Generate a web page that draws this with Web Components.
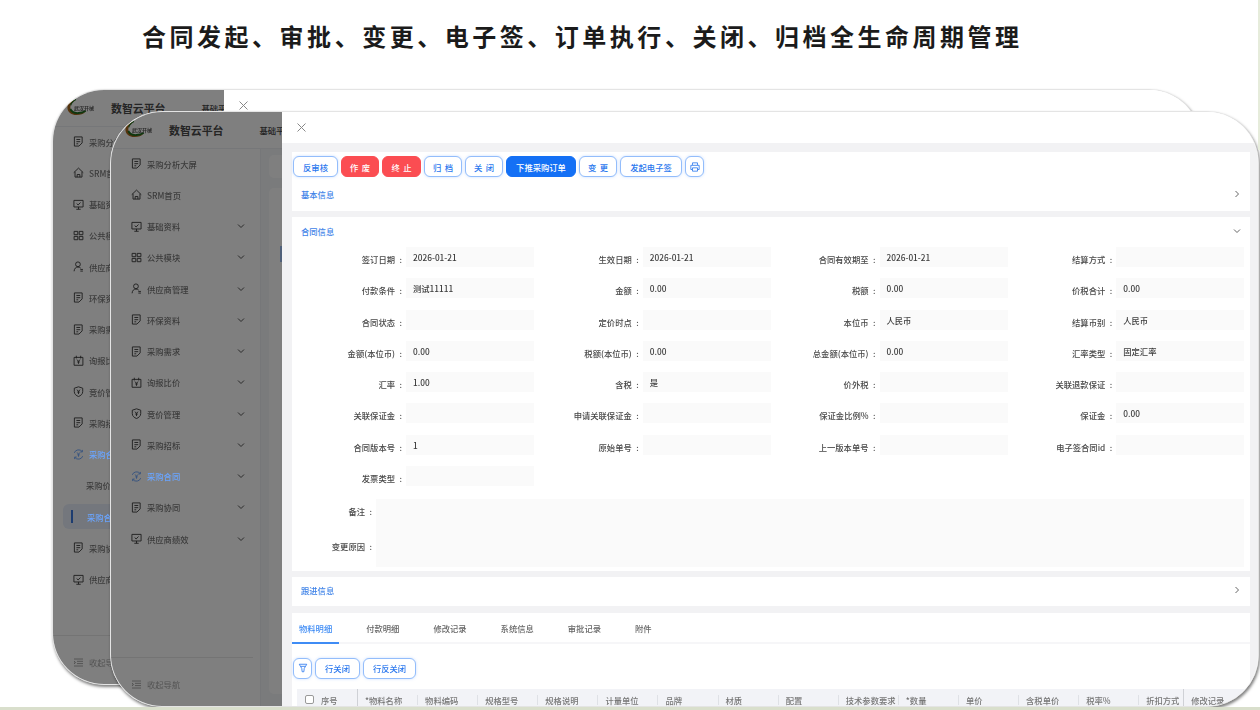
<!DOCTYPE html>
<html lang="zh-CN">
<head>
<meta charset="utf-8">
<title>合同全生命周期管理</title>
<style>
html,body{margin:0;padding:0;background:#fff;overflow:hidden}
body{width:1260px;height:710px;font-family:"Noto Sans CJK SC","Noto Sans",sans-serif;font-size:8.3px;color:#444}
</style>
</head>
<body>
<demo-slide></demo-slide>
<script>
const ICONS={
 doc:'<path d="M1.5 1h8.5v6.5M1.5 1v10h5M3.7 3.8h4.2M3.7 6.2h4.2M3.7 8.5h2M6.5 11l3.5-3.5"/>',
 home:'<path d="M.8 6.2 6 1.2l5.2 5M2.2 5.2v5.8h7.6V5.2M4.5 11V8.2h3V11"/>',
 screen:'<path d="M1 1.5h10v7.2H1zM6 8.7v2.4M3.6 11.2h4.8M4 5l1.6 1.5L8.2 3.8"/>',
 grid:'<path d="M1.2 1.5h4v3.6h-4zM6.8 1.5h4v3.6h-4zM1.2 7h4v3.6h-4zM6.8 7h4v3.6h-4z"/>',
 user:'<circle cx="5.4" cy="3.6" r="2.6"/><path d="M1.2 11.2c.2-3 1.8-4.6 4.2-4.6 1.2 0 2.2.4 3 1.2M8 9.2l2.8 0M8 11l2.8 0"/>',
 cal:'<path d="M1.2 2.6h9.6v8.6H1.2zM3.6.8v3M8.4.8v3M4.4 5l1.6 2 1.6-2M6 7v2.6M4.6 7.6h2.8"/>',
 shield:'<path d="M6 .9l4.6 1.5v3.8c0 2.8-2.3 4.3-4.6 5.3-2.3-1-4.6-2.5-4.6-5.3V2.400zM4.400 4l1.600 2 1.600-2M6 6v2.800M4.600 6.600h2.800"/>',
 cycle:'<path d="M1.400 4.200A5 5 0 0 1 10 2.800M10.600 7.800A5 5 0 0 1 2 9.200M10.200 1v2.200H8M1.800 11V8.800H4M4.500 3.800 6 5.800l1.500-2M6 5.800v2.600M4.700 6.400h2.600"/>'
};
const svg=(w,body,extra='')=>`<svg width="${w}" height="${w}" viewBox="0 0 12 12" fill="none" stroke="currentColor" stroke-width="1" ${extra}>${body}</svg>`;
const def=(name,css,html,init)=>{
  customElements.define(name,class extends HTMLElement{
    constructor(){super();this.attachShadow({mode:'open'});}
    connectedCallback(){
      if(this._done)return;this._done=true;
      this.shadowRoot.innerHTML=`<style>${css}</style>${typeof html==='function'?html(this):html}`;
      if(init)init(this,this.shadowRoot);
    }
  });
};

def('slide-title',`:host{display:block;position:absolute;left:142px;top:18px;font-size:24px;font-weight:700;line-height:36px;letter-spacing:3.52px;color:#1b1b1b;white-space:nowrap}`,`<slot></slot>`);

def('brand-logo',`:host{display:block;position:relative;width:30px;height:20px;flex:none}
 svg{position:absolute;left:0;top:0}
 span{position:absolute;left:8px;top:5px;font-size:5px;line-height:9px;font-weight:700;color:#555;white-space:nowrap}`,
 `<svg width="30" height="20" viewBox="0 0 30 20" fill="none"><path d="M10 1.500C4 3 1 6.500 1.500 10.500c.5 4 4 6.500 9 6.500 4 0 7-1 9-3-2.500 1-5.500 1.400-8 1C7 14.500 4.500 12.500 4.300 9.500 4.100 6.500 6 3.500 10 1.500z" fill="#a8661a"/><path d="M4.300 11c1.500 3 4.500 4.300 8 4 3-.2 5.500-1 7.500-2.300" stroke="#1f6e1f" stroke-width="1.800"/><path d="M10 1.500C7 3 5.300 5 4.700 7.300" stroke="#1f6e1f" stroke-width="1.200"/></svg><span>武汉开械</span>`);

def('nav-item',`:host{display:flex;align-items:center;height:31.25px;padding-left:20px;box-sizing:border-box;color:#3c3c3c;font-size:8.3px;font-weight:500;position:relative;white-space:nowrap}
 :host([active]){color:#6aa5ff}
 :host([sub]){padding-left:33px;color:#3c3c3c}
 :host([current]){padding-left:34px;color:#6aa5ff}
 :host([current])::before{content:"";position:absolute;left:10px;right:8px;top:3px;bottom:3px;border-radius:6px;background:#e8effb}
 :host([current])::after{content:"";position:absolute;left:18px;top:9px;bottom:9px;width:2px;background:#3a78e0}
 svg.i{width:11px;height:11px;margin-right:5px;flex:none}
 span{position:relative;z-index:1}
 svg.c{position:absolute;left:126px;top:11.500px;color:#555}`,
 h=>{
   const ic=h.getAttribute('icon');
   return (ic?svg(11,ICONS[ic],'class="i"'):'')+`<span><slot></slot></span>`+(h.hasAttribute('chevron')?`<svg class="c" width="8" height="8" viewBox="0 0 8 8" fill="none" stroke="currentColor" stroke-width="1"><path d="M1 2.500 4 5.500 7 2.500"/></svg>`:'');
 });

def('app-window',`:host{display:block;position:absolute;width:1149px;height:596px;box-sizing:border-box;border-radius:52px;border:1px solid #e4e4e4;overflow:hidden;background:#fff;box-shadow:1px 2px 3px rgba(0,0,0,.5);filter:blur(.4px)}
 .app{display:flex;flex-direction:column;height:100%;background:#f5f6f8}
 header{display:flex;align-items:center;height:36px;flex:none;background:#fff;border-bottom:1px solid #eceef2;padding-left:13px;box-sizing:content-box}
 .name{font-size:10.900px;font-weight:700;color:#4a4a4a;margin-left:15px;line-height:36px;white-space:nowrap}
 .top{font-size:8.300px;font-weight:500;color:#444;margin-left:36px;white-space:nowrap}
 .body{flex:1;display:flex;min-height:0}
 aside{width:149px;flex:none;background:#fff;border-right:1px solid #eceef2;display:flex;flex-direction:column}
 .nav{flex:1;margin-top:-1px}
 .foot{height:49px;flex:none;margin-right:7px;border-top:1px solid #e8e8e8;display:flex;align-items:center;padding:4px 0 0 21px;box-sizing:border-box;color:#a8a8a8;font-size:8.300px;gap:6px}
 main{flex:1;padding:6px 0 12px 8px;display:flex;flex-direction:column;gap:10px;overflow:hidden}
 main div{background:#fff;border-radius:5px 0 0 5px}
 main div:first-child{height:23px;flex:none}
 main div:last-child{flex:1;position:relative}
 main div:last-child::after{content:"";position:absolute;left:11px;top:58px;width:3px;height:16px;background:#9fc0f5}
 .mask{position:absolute;inset:0;background:rgba(0,0,0,.5)}
 .drawer{position:absolute;left:171px;top:0;right:0;bottom:0;background:#fff;display:flex;flex-direction:column;overflow:hidden}
 .close{height:31px;flex:none;padding:11px 0 0 15px;box-sizing:border-box;color:#888}
 .close svg{display:block}`,
 `<div class="app"><header><brand-logo></brand-logo><div class="name">数智云平台</div><div class="top">基础平台</div></header>
  <div class="body"><aside><div class="nav"><slot name="nav"></slot></div>
  <div class="foot"><svg width="9" height="9" viewBox="0 0 9 9" fill="none" stroke="currentColor"><path d="M0 1h9M3 3.300h6M3 5.600h6M0 8h9M0 3l1.600 1.500L0 6z"/></svg><span>收起导航</span></div></aside>
  <main><div></div><div></div></main></div></div>
  <div class="mask"></div>
  <div class="drawer"><div class="close"><svg width="9" height="9" viewBox="0 0 9 9" fill="none" stroke="currentColor" stroke-width="1"><path d="M.5.500l8 8M8.500.500l-8 8"/></svg></div><slot name="drawer"></slot></div>`);

def('drawer-body',`:host{display:flex;flex-direction:column;gap:6px;flex:1;min-height:0;background:#f2f2f4;padding:9px 8px 0 10px;overflow:hidden;font-weight:500}`,`<slot></slot>`);

def('info-card',`:host{display:block;background:#fff;flex:none}
 .h{display:flex;align-items:center;justify-content:space-between;height:var(--h,29px);box-sizing:border-box;padding:0 9px var(--pb,2px) 9px;color:#3f83e8;font-size:8.300px}
 svg{color:#666}`,
 h=>{
  const t=h.getAttribute('heading');
  const chev=h.getAttribute('open')==='1'?`<svg width="8" height="8" viewBox="0 0 8 8" fill="none" stroke="currentColor"><path d="M1 2.500 4 5.500 7 2.500"/></svg>`:`<svg width="8" height="8" viewBox="0 0 8 8" fill="none" stroke="currentColor"><path d="M2.500 1 5.500 4 2.500 7"/></svg>`;
  return `<slot name="top"></slot>${t?`<div class="h"><span>${t}</span>${chev}</div>`:''}<slot></slot>`;
 });

def('ui-button',`:host{display:inline-flex;align-items:center;justify-content:center;height:21px;box-sizing:border-box;border:1px solid #93bdfb;border-radius:6px;background:#fff;color:#2b78ee;font-size:8.300px;font-weight:500;word-spacing:1.500px;white-space:pre;box-shadow:0 0 3px rgba(100,160,255,.35);flex:none}
 :host([kind=red]){background:#fb4d52;border-color:#fb4d52;color:#fff;box-shadow:none}
 :host([kind=primary]){background:#1470f5;border-color:#1470f5;color:#fff;box-shadow:none}`,`<slot></slot>`);

def('button-bar',`:host{display:flex;gap:3px;padding:var(--p,4px 0 0 1px);box-sizing:border-box}`,`<slot></slot>`);

def('form-grid',`:host{display:grid;grid-template-columns:repeat(4,1fr);grid-auto-rows:31.300px;padding:0 6px 0 5px}`,`<slot></slot>`);

def('form-field',`:host{display:flex;height:20px;min-width:0}
 label{width:109px;flex:none;text-align:right;padding:2px 4px 0 0;box-sizing:border-box;line-height:20px;color:#484848;white-space:nowrap}
 label b{font-weight:500;margin-left:4.500px}
 div{flex:none;width:128px;background:#fafafa;padding-left:7px;box-sizing:border-box;line-height:20px;color:#3c3c3c}`,
 h=>`<label>${h.getAttribute('label')}<b>:</b></label><div>${h.getAttribute('value')||''}</div>`);

def('form-area',`:host{display:flex;padding:0 6px 0 5px;height:var(--a,33px)}
 label{width:79px;flex:none;text-align:right;padding-right:4px;box-sizing:border-box;line-height:var(--l,25px);color:#484848;white-space:nowrap}
 label b{font-weight:500;margin-left:4.500px}
 div{flex:1;background:#fafafa}`,
 h=>`<label>${h.getAttribute('label')}<b>:</b></label><div></div>`);

def('tab-bar',`:host{display:flex;height:29px;border-bottom:2px solid #f6f6f8;padding-left:7px;gap:34px;box-sizing:content-box;position:relative;color:#666;line-height:30px;font-size:8.300px}
 :host::after{content:"";position:absolute;left:0;top:29px;width:47px;height:2px;background:#3f8cf5}`,`<slot></slot>`);
def('tab-item',`:host{display:block;white-space:nowrap}:host([active]){color:#3f8cf5}`,`<slot></slot>`);

def('data-table',`:host{display:grid;grid-template-columns:60px repeat(13,60.100px) 45px 1fr;margin:10px 5px 0;height:24px;background:#f2f3f7;color:#777;font-size:8.300px;line-height:22px;box-sizing:border-box}`,`<slot></slot>`);
def('th-cell',`:host{display:flex;align-items:center;padding-left:8px;white-space:nowrap;position:relative;height:22px;box-sizing:border-box}
 :host::before{content:"";position:absolute;left:0;top:6px;height:10px;width:1px;background:#dfe1e6}
 :host([first])::before{display:none}
 :host([fixed])::before{top:0;height:24px;background:#cfd1d6}
 i{display:block;width:9px;height:9px;border:1px solid #999;border-radius:2px;background:#fff;margin-right:7px;box-sizing:border-box}
 `,h=>`${h.hasAttribute('first')?'<i></i>':''}<slot></slot>`);

def('demo-slide',`:host{display:block;position:relative;width:1260px;height:710px;overflow:hidden;background:#fff}
 .r{position:absolute;right:0;top:0;width:2px;height:150px;background:#e6ecdb}
 .b{position:absolute;left:0;right:0;bottom:0;height:3px;background:#d9dfcc}`,
 ()=>{
  const N=(ic,t,ch=1,x='')=>`<nav-item slot="nav" icon="${ic}" ${ch?'chevron':''} ${x}>${t}</nav-item>`;
  const backNav=N('doc','采购分析大屏',0)+N('home','SRM首页',0)+N('screen','基础资料')+N('grid','公共模块')+N('user','供应商管理')+N('doc','环保资料')+N('doc','采购需求')+N('cal','询报比价')+N('shield','竞价管理')+N('doc','采购招标')+N('cycle','采购合同',1,'active')
    +`<nav-item slot="nav" sub>采购价格库</nav-item><nav-item slot="nav" current>采购合同</nav-item>`+N('doc','采购协同')+N('screen','供应商绩效');
  const frontNav=N('doc','采购分析大屏',0)+N('home','SRM首页',0)+N('screen','基础资料')+N('grid','公共模块')+N('user','供应商管理')+N('doc','环保资料')+N('doc','采购需求')+N('cal','询报比价')+N('shield','竞价管理')+N('doc','采购招标')+N('cycle','采购合同',1,'active')+N('doc','采购协同')+N('screen','供应商绩效');
  const B=(t,w,k='')=>`<ui-button style="width:${w}px" ${k?`kind="${k}"`:''}>${t}</ui-button>`;
  const fields=[['签订日期','2026-01-21'],['生效日期','2026-01-21'],['合同有效期至','2026-01-21'],['结算方式',''],
   ['付款条件','测试11111'],['金额','0.00'],['税额','0.00'],['价税合计','0.00'],
   ['合同状态',''],['定价时点',''],['本位币','人民币'],['结算币别','人民币'],
   ['金额(本位币)','0.00'],['税额(本位币)','0.00'],['总金额(本位币)','0.00'],['汇率类型','固定汇率'],
   ['汇率','1.00'],['含税','是'],['价外税',''],['关联退款保证',''],
   ['关联保证金',''],['申请关联保证金',''],['保证金比例%',''],['保证金','0.00'],
   ['合同版本号','1'],['原始单号',''],['上一版本单号',''],['电子签合同id',''],['发票类型','']];
  const cols=['*物料名称','物料编码','规格型号','规格说明','计量单位','品牌','材质','配置','技术参数要求','*数量','单价','含税单价','税率%','折扣方式','修改记录'];
  return `<slide-title>合同发起、审批、变更、电子签、订单执行、关闭、归档全生命周期管理</slide-title>
  <app-window style="left:52px;top:89px">${backNav}</app-window>
  <app-window style="left:110px;top:111px">${frontNav}
   <drawer-body slot="drawer">
    <info-card heading="基本信息" style="--h:34px;--pb:0px">
      <button-bar slot="top">${B('反审核',45)}${B('作 废',38,'red')}${B('终 止',39,'red')}${B('归 档',38)}${B('关 闭',38)}${B('下推采购订单',70,'primary')}${B('变 更',38)}${B('发起电子签',62)}<ui-button style="width:19px">${svg(10,'<path d="M3 3.500V1h6v2.500M2.500 9H1V4h10v5H9.500M3 7h6v4H3z"/>')}</ui-button></button-bar>
    </info-card>
    <info-card heading="合同信息" open="1" style="--h:30px;padding-bottom:3.600px">
      <form-grid>${fields.map(f=>`<form-field label="${f[0]}" value="${f[1]}"></form-field>`).join('')}</form-grid>
      <form-area label="备注" style="margin-top:2px"></form-area>
      <form-area label="变更原因" style="--a:35px;--l:28px"></form-area>
    </info-card>
    <info-card heading="跟进信息"></info-card>
    <info-card style="flex:1;margin-top:1px" heading="">
      <tab-bar slot="top"><tab-item active>物料明细</tab-item><tab-item>付款明细</tab-item><tab-item>修改记录</tab-item><tab-item>系统信息</tab-item><tab-item>审批记录</tab-item><tab-item>附件</tab-item></tab-bar>
      <button-bar style="--p:14px 0 0 1px"><ui-button style="width:19px">${svg(10,'<path d="M1.500 1.500h9L7.500 6.500 7 10.500H5L4.500 6.500zM3.500 4h5"/>')}</ui-button>${B('行关闭',45)}${B('行反关闭',53)}</button-bar>
      <data-table><th-cell first>序号</th-cell>${cols.map((c,i)=>`<th-cell ${i===0||i===14?'fixed':''}>${c}</th-cell>`).join('')}</data-table>
    </info-card>
   </drawer-body>
  </app-window>
  <div class="r"></div><div class="b"></div>`;
 });
</script>
</body>
</html>
